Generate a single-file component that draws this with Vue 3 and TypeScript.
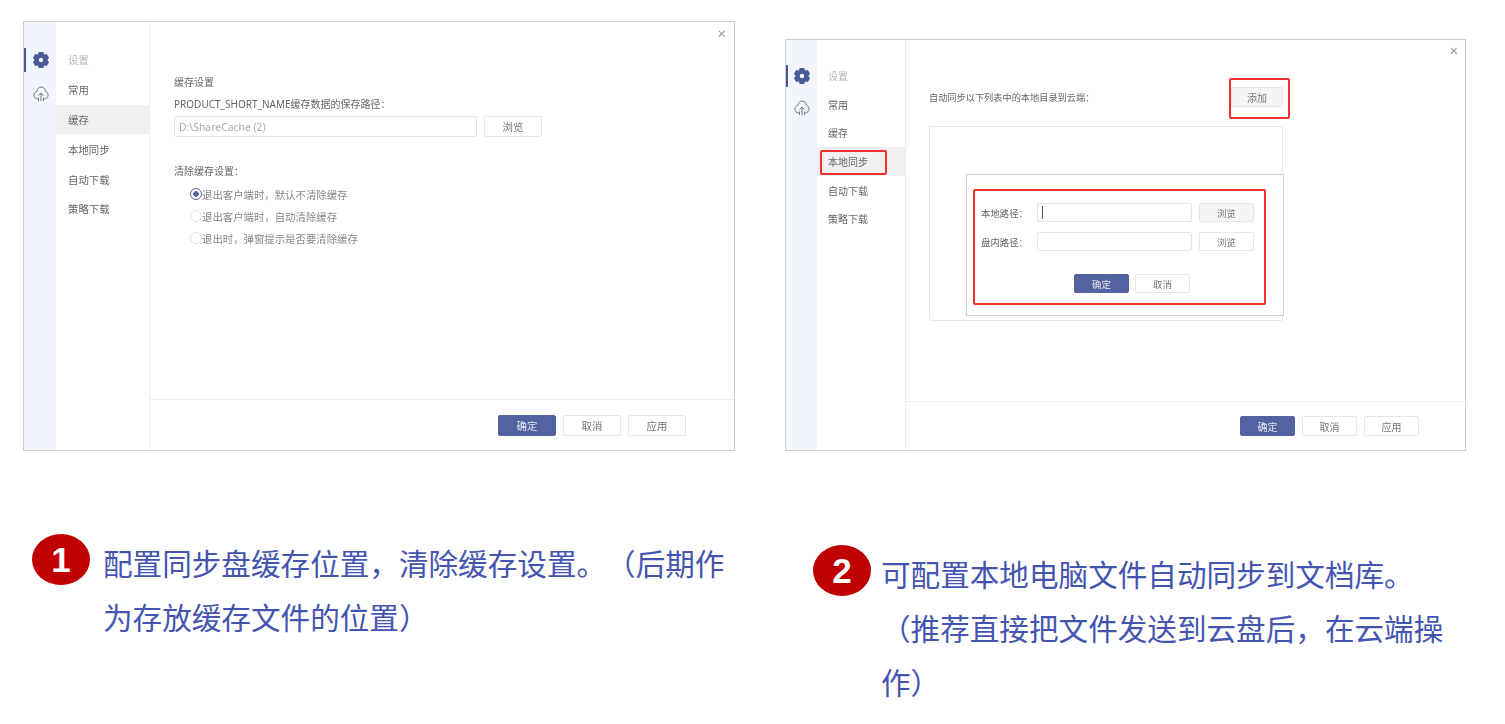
<script setup lang="ts">
const navItems = ["常用", "缓存", "本地同步", "自动下载", "策略下载"];
const radios = [
  "退出客户端时，默认不清除缓存",
  "退出客户端时，自动清除缓存",
  "退出时，弹窗提示是否要清除缓存",
];
const teeth = [0, 60, 120, 180, 240, 300];
</script>

<template>
  <div class="page">
    <section class="col col-a">
      <div class="win win-a">
        <span class="close">×</span>
        <aside class="rail">
          <div class="rail-item active">
            <svg width="18" height="18" viewBox="0 0 18 18">
              <rect v-for="t in teeth" :key="t" x="6.4" y="0.9" width="5.2" height="4" rx="0.8" fill="#4a5a97" :transform="`rotate(${t} 9 9)`" />
              <circle cx="9" cy="9" r="4.5" fill="none" stroke="#4a5a97" stroke-width="4.6" />
            </svg>
          </div>
          <div class="rail-item">
            <svg width="16" height="16" viewBox="0 0 18 18" fill="none" stroke="#666" stroke-width="1">
              <path d="M5.5 14.5C2.8 14.5 1 12.5 1 10.2 1 8.2 2.4 6.6 4.2 6.2 4.7 3.2 6.8 1.2 9.2 1.2 11.8 1.2 13.8 3.2 14.2 6 15.9 6.5 17 8.2 17 10.2 17 12.5 15.2 14.5 12.6 14.5" />
              <path d="M9 17V8M6.2 10.8 9 8 11.8 10.8M6.2 13V17M11.8 13V17" />
            </svg>
          </div>
        </aside>
        <nav class="nav">
          <div class="nav-title">设置</div>
          <div v-for="item in navItems" :key="item" class="nav-row" :class="{ selected: item === '缓存' }">{{ item }}</div>
        </nav>
        <div class="main">
          <div class="body body-a">
            <p class="line">缓存设置</p>
            <p class="line path-label">PRODUCT_SHORT_NAME缓存数据的保存路径：</p>
            <div class="path-row">
              <div class="field field-path">D:\ShareCache (2)</div>
              <div class="btn btn-path">浏览</div>
            </div>
            <p class="line clear-label">清除缓存设置：</p>
            <div class="radios">
              <div v-for="(r, i) in radios" :key="r" class="radio-row">
                <span class="radio" :class="{ on: i === 0 }"></span>{{ r }}
              </div>
            </div>
          </div>
          <footer class="foot foot-a">
            <div class="btn primary">确定</div>
            <div class="btn">取消</div>
            <div class="btn">应用</div>
          </footer>
        </div>
      </div>
      <div class="caption caption-a">
        <div class="badge">1</div>
        <p class="caption-text text-a">配置同步盘缓存位置，清除缓存设置。（后期作为存放缓存文件的位置）</p>
      </div>
    </section>

    <section class="col col-b">
      <div class="win win-b">
        <span class="close">×</span>
        <aside class="rail">
          <div class="rail-item active">
            <svg width="18" height="18" viewBox="0 0 18 18">
              <rect v-for="t in teeth" :key="t" x="6.4" y="0.9" width="5.2" height="4" rx="0.8" fill="#4a5a97" :transform="`rotate(${t} 9 9)`" />
              <circle cx="9" cy="9" r="4.5" fill="none" stroke="#4a5a97" stroke-width="4.6" />
            </svg>
          </div>
          <div class="rail-item">
            <svg width="16" height="16" viewBox="0 0 18 18" fill="none" stroke="#666" stroke-width="1">
              <path d="M5.5 14.5C2.8 14.5 1 12.5 1 10.2 1 8.2 2.4 6.6 4.2 6.2 4.7 3.2 6.8 1.2 9.2 1.2 11.8 1.2 13.8 3.2 14.2 6 15.9 6.5 17 8.2 17 10.2 17 12.5 15.2 14.5 12.6 14.5" />
              <path d="M9 17V8M6.2 10.8 9 8 11.8 10.8M6.2 13V17M11.8 13V17" />
            </svg>
          </div>
        </aside>
        <nav class="nav">
          <div class="nav-title">设置</div>
          <div v-for="item in navItems" :key="item" class="nav-row" :class="{ selected: item === '本地同步' }">
            {{ item }}
            <span v-if="item === '本地同步'" class="mark mark-nav"></span>
          </div>
        </nav>
        <div class="main">
          <div class="body body-b">
            <div class="sync-row">
              <span>自动同步以下列表中的本地目录到云端：</span>
              <div class="btn btn-add">添加<span class="mark mark-add"></span></div>
            </div>
            <div class="list">
              <div class="dialog">
                <span class="mark mark-dialog"></span>
                <div class="dialog-row">
                  <label>本地路径：</label>
                  <div class="field"><i class="caret"></i></div>
                  <div class="btn soft">浏览</div>
                </div>
                <div class="dialog-row">
                  <label>盘内路径：</label>
                  <div class="field"></div>
                  <div class="btn">浏览</div>
                </div>
                <div class="dialog-actions">
                  <div class="btn primary">确定</div>
                  <div class="btn">取消</div>
                </div>
              </div>
            </div>
          </div>
          <footer class="foot foot-b">
            <div class="btn primary">确定</div>
            <div class="btn">取消</div>
            <div class="btn">应用</div>
          </footer>
        </div>
      </div>
      <div class="caption caption-b">
        <div class="badge">2</div>
        <p class="caption-text text-b">可配置本地电脑文件自动同步到文档库。（推荐直接把文件发送到云盘后，在云端操作）</p>
      </div>
    </section>
  </div>
</template>

<style scoped>
* {
  box-sizing: border-box;
}

.page {
  display: flex;
  align-items: flex-start;
  width: 1505px;
  height: 724px;
  padding-left: 23px;
  overflow: hidden;
  background: #fff;
  font-family: "Noto Sans", "Noto Sans CJK SC", sans-serif;
  color: #666;
}

.col-a {
  width: 712px;
  padding-top: 21px;
}

.col-b {
  width: 681px;
  margin-left: 50px;
  padding-top: 39px;
}

.win {
  position: relative;
  display: flex;
  border: 1px solid #cdcdcd;
  background: #fff;
  font-size: 10.4px;
  filter: blur(0.45px);
}

.win-a {
  height: 430px;
}

.win-b {
  height: 412px;
  font-size: 10px;
}

.close {
  position: absolute;
  top: 3px;
  right: 8px;
  font-size: 15px;
  line-height: 16px;
  color: #999;
}

.win-b .close {
  top: 2px;
  right: 7px;
}

.rail {
  flex: none;
  background: #f2f5fb;
}

.win-a .rail {
  width: 32px;
  padding-top: 26px;
}

.win-b .rail {
  width: 31px;
  padding-top: 25px;
}

.rail-item {
  display: flex;
  align-items: center;
  justify-content: center;
  height: 24px;
  margin-bottom: 10px;
  border-left: 2px solid transparent;
}

.win-b .rail-item {
  width: 30px;
  height: 22px;
}

.rail-item.active {
  border-left-color: #4a5a97;
}

.nav {
  flex: none;
  border-right: 1px solid #eee;
}

.win-a .nav {
  width: 94px;
  padding-top: 23px;
}

.win-b .nav {
  width: 89px;
  padding-top: 21.5px;
}

.nav-title,
.nav-row {
  position: relative;
  padding-left: 11px;
  display: flex;
  align-items: center;
}

.win-a .nav-title,
.win-a .nav-row {
  height: 29.8px;
  padding-left: 12px;
}

.win-b .nav-title,
.win-b .nav-row {
  height: 28.6px;
}

.nav-title {
  color: #b5b5b5;
}

.nav-row.selected {
  background: #f0f0f3;
}

.main {
  flex: 1;
  display: flex;
  flex-direction: column;
  min-width: 0;
}

.body {
  flex: 1;
}

.body-a {
  padding: 52px 0 0 24px;
}

.body-b {
  padding: 47px 0 0 23px;
}

.line {
  margin: 0;
  font-size: 10px;
  line-height: 16px;
}

.path-label {
  margin-top: 6px;
}

.path-row {
  display: flex;
  gap: 7px;
  margin-top: 4px;
}

.field {
  width: 155px;
  height: 19px;
  border: 1px solid #e4e4e4;
  border-radius: 2px;
  background: #fff;
  display: flex;
  align-items: center;
  padding-left: 4px;
}

.field-path {
  width: 303px;
  height: 21px;
  color: #aaa;
}

.btn {
  display: flex;
  align-items: center;
  justify-content: center;
  width: 58px;
  height: 21px;
  border: 1px solid #e6e6e6;
  border-radius: 2px;
  background: #fff;
  color: #777;
}

.btn.primary {
  border-color: #5362a0;
  background: #5362a0;
  color: #e4e7f2;
}

.btn.soft,
.btn-add {
  background: #f4f5f7;
}

.clear-label {
  margin-top: 26px;
}

.radios {
  margin: 4px 0 0 16px;
}

.radio-row {
  display: flex;
  align-items: center;
  height: 22px;
  color: #888;
}

.radio {
  flex: none;
  width: 12px;
  height: 12px;
  border: 1px solid #e2e2e2;
  border-radius: 50%;
}

.radio.on {
  border-color: #5362a0;
  background: radial-gradient(circle, #5362a0 2.5px, #fff 3px);
}

.foot {
  flex: none;
  display: flex;
  justify-content: flex-end;
  border-top: 1px solid #eee;
  gap: 7px;
}

.foot-a {
  height: 51px;
  padding: 15px 48px 0 0;
}

.foot-b {
  height: 49px;
  padding: 14px 46px 0 0;
}

.foot-b .btn {
  width: 55px;
  height: 20px;
}

.sync-row {
  display: flex;
  align-items: center;
  justify-content: space-between;
  width: 354px;
  height: 20px;
  font-size: 9.2px;
}

.btn-add {
  position: relative;
  width: 52px;
  height: 20px;
  font-size: 10px;
}

.list {
  position: relative;
  width: 354px;
  height: 195px;
  margin-top: 19px;
  border: 1px solid #e8e8e8;
  border-radius: 2px;
}

.dialog {
  position: absolute;
  top: 47px;
  left: 36px;
  width: 318px;
  height: 142px;
  padding: 28px 0 0 14px;
  border: 1px solid #cfcfcf;
  background: #fff;
  font-size: 9.4px;
}

.dialog-row {
  display: flex;
  align-items: center;
  gap: 7px;
  height: 19px;
  margin-bottom: 10px;
}

.dialog-row label {
  flex: none;
  width: 49px;
  white-space: nowrap;
}

.dialog-row .btn {
  width: 55px;
  height: 19px;
}

.caret {
  width: 1px;
  height: 13px;
  background: #555;
}

.dialog-actions {
  display: flex;
  gap: 6px;
  margin: 23px 0 0 93px;
}

.dialog-actions .btn {
  width: 55px;
  height: 19px;
}

.mark {
  position: absolute;
  border: 2px solid #f0302a;
  border-radius: 2px;
}

.mark-nav {
  top: 2.5px;
  left: 3px;
  width: 67px;
  height: 25px;
}

.mark-add {
  top: -10px;
  left: -3px;
  width: 61px;
  height: 41px;
}

.mark-dialog {
  top: 14px;
  left: 6px;
  width: 293px;
  height: 116px;
}

.caption {
  display: flex;
  align-items: flex-start;
}

.caption-a {
  margin: 83px 0 0 9px;
}

.caption-b {
  margin: 94px 0 0 28px;
}

.badge {
  flex: none;
  width: 58px;
  height: 51px;
  border-radius: 50%;
  background: #c00000;
  color: #fff;
  font: bold 35px/51px "Liberation Sans", sans-serif;
  text-align: center;
}

.caption-text {
  margin: 2px 0 0;
  font-family: "Noto Sans CJK SC", sans-serif;
  font-size: 29.6px;
  line-height: 54px;
  color: #4355b0;
  text-spacing-trim: space-all;
  font-feature-settings: "chws" 0, "halt" 0, "palt" 0;
}

.text-a {
  width: 630px;
  margin-left: 13px;
}

.text-b {
  width: 570px;
  margin-left: 10px;
}
</style>

<style>
body {
  margin: 0;
  background: #fff;
}
</style>
